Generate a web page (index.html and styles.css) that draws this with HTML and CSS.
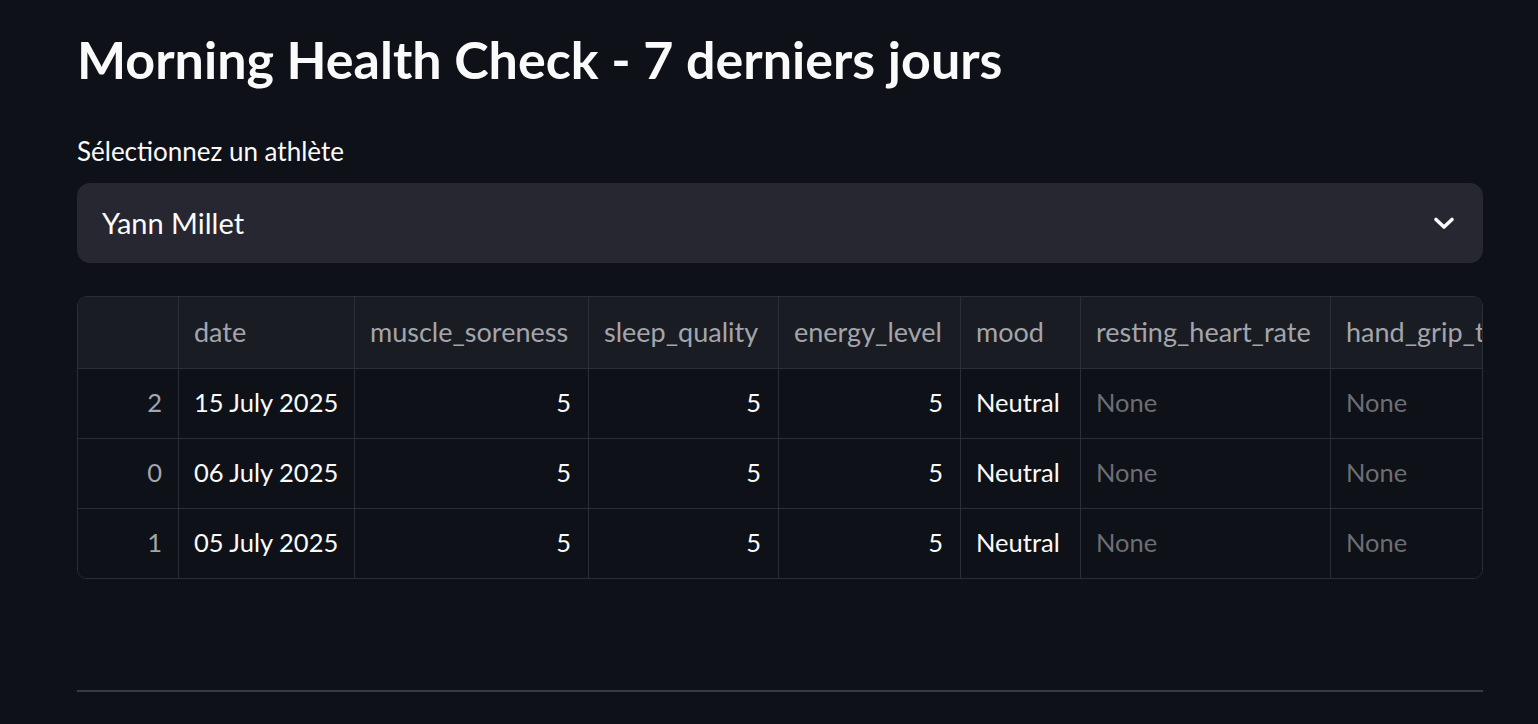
FILE: index.html
```html
<!DOCTYPE html>
<html lang="fr">
<head>
<meta charset="utf-8">
<title>Morning Health Check</title>
<link rel="stylesheet" href="styles.css">
</head>
<body>
<main class="main">
  <h1 class="title">Morning Health Check - 7 derniers jours</h1>
  <div class="field">
    <label class="label">Sélectionnez un athlète</label>
    <div class="select">
      <span class="select-value">Yann Millet</span>
      <svg class="chevron" width="24" height="24" viewBox="0 0 24 24"><path d="M4 8.5 L12 16 L20 8.5" fill="none" stroke="#fafafa" stroke-width="3.6" stroke-linecap="round" stroke-linejoin="round"/></svg>
    </div>
  </div>
  <div class="table-wrap">
    <div class="grid">
      <div class="cell head"></div>
      <div class="cell head">date</div>
      <div class="cell head">muscle_soreness</div>
      <div class="cell head">sleep_quality</div>
      <div class="cell head">energy_level</div>
      <div class="cell head">mood</div>
      <div class="cell head">resting_heart_rate</div>
      <div class="cell head">hand_grip_test</div>

      <div class="cell idx">2</div>
      <div class="cell">15 July 2025</div>
      <div class="cell num">5</div>
      <div class="cell num">5</div>
      <div class="cell num">5</div>
      <div class="cell">Neutral</div>
      <div class="cell none">None</div>
      <div class="cell none">None</div>

      <div class="cell idx">0</div>
      <div class="cell">06 July 2025</div>
      <div class="cell num">5</div>
      <div class="cell num">5</div>
      <div class="cell num">5</div>
      <div class="cell">Neutral</div>
      <div class="cell none">None</div>
      <div class="cell none">None</div>

      <div class="cell idx last">1</div>
      <div class="cell last">05 July 2025</div>
      <div class="cell num last">5</div>
      <div class="cell num last">5</div>
      <div class="cell num last">5</div>
      <div class="cell last">Neutral</div>
      <div class="cell none last">None</div>
      <div class="cell none last">None</div>
    </div>
  </div>
  <hr class="divider">
</main>
</body>
</html>
```

FILE: styles.css
```css
* { box-sizing: border-box; }
html, body {
  margin: 0;
  padding: 0;
  background: #0e1117;
  color: #fafafa;
  font-family: "Lato", "Liberation Sans", sans-serif;
  height: 724px;
  overflow: hidden;
}
.main {
  width: 1406px;
  margin-left: 77px;
  display: flex;
  flex-direction: column;
}
.title {
  margin: 0;
  padding-top: 27px;
  font-size: 52px;
  line-height: 65px;
  font-weight: 700;
  color: #fafafa;
  white-space: nowrap;
}
.field {
  margin-top: 44px;
  display: flex;
  flex-direction: column;
}
.label {
  font-size: 26px;
  line-height: 30px;
  height: 47px;
  color: #fafafa;
}
.select {
  height: 80px;
  background: #262730;
  border-radius: 13px;
  display: flex;
  align-items: center;
  justify-content: space-between;
  padding: 0 27px 0 25px;
}
.select-value {
  font-size: 29px;
  color: #fafafa;
  padding-bottom: 1px;
}
.chevron { display: block; }
.table-wrap {
  margin-top: 33px;
  border: 1px solid #2c2e36;
  border-radius: 10px;
  overflow: hidden;
  height: 283px;
}
.grid {
  display: grid;
  grid-template-columns: 101px 176px 234px 190px 182px 120px 250px 250px;
  grid-template-rows: 72px 70px 70px 69px;
  width: 1503px;
}
.cell {
  border-right: 1px solid #2c2e36;
  border-bottom: 1px solid #2c2e36;
  display: flex;
  align-items: center;
  padding: 0 16px 4px 15px;
  font-size: 25.5px;
  color: #fafafa;
  white-space: nowrap;
  overflow: hidden;
  background: #0e1117;
}
.cell.last { border-bottom: none; padding-bottom: 3px; }
.cell.head {
  background: #1a1c24;
  color: #a3a5ab;
  font-size: 27px;
  padding-bottom: 2px;
}
.cell.idx {
  justify-content: flex-end;
  color: #a3a5ab;
  padding-right: 16px;
}
.cell.num {
  justify-content: flex-end;
  padding-right: 17px;
}
.cell.none { color: #6c6e75; }
.divider {
  margin: 111px 0 0 0;
  border: none;
  height: 2px;
  background: #393a41;
}
```
